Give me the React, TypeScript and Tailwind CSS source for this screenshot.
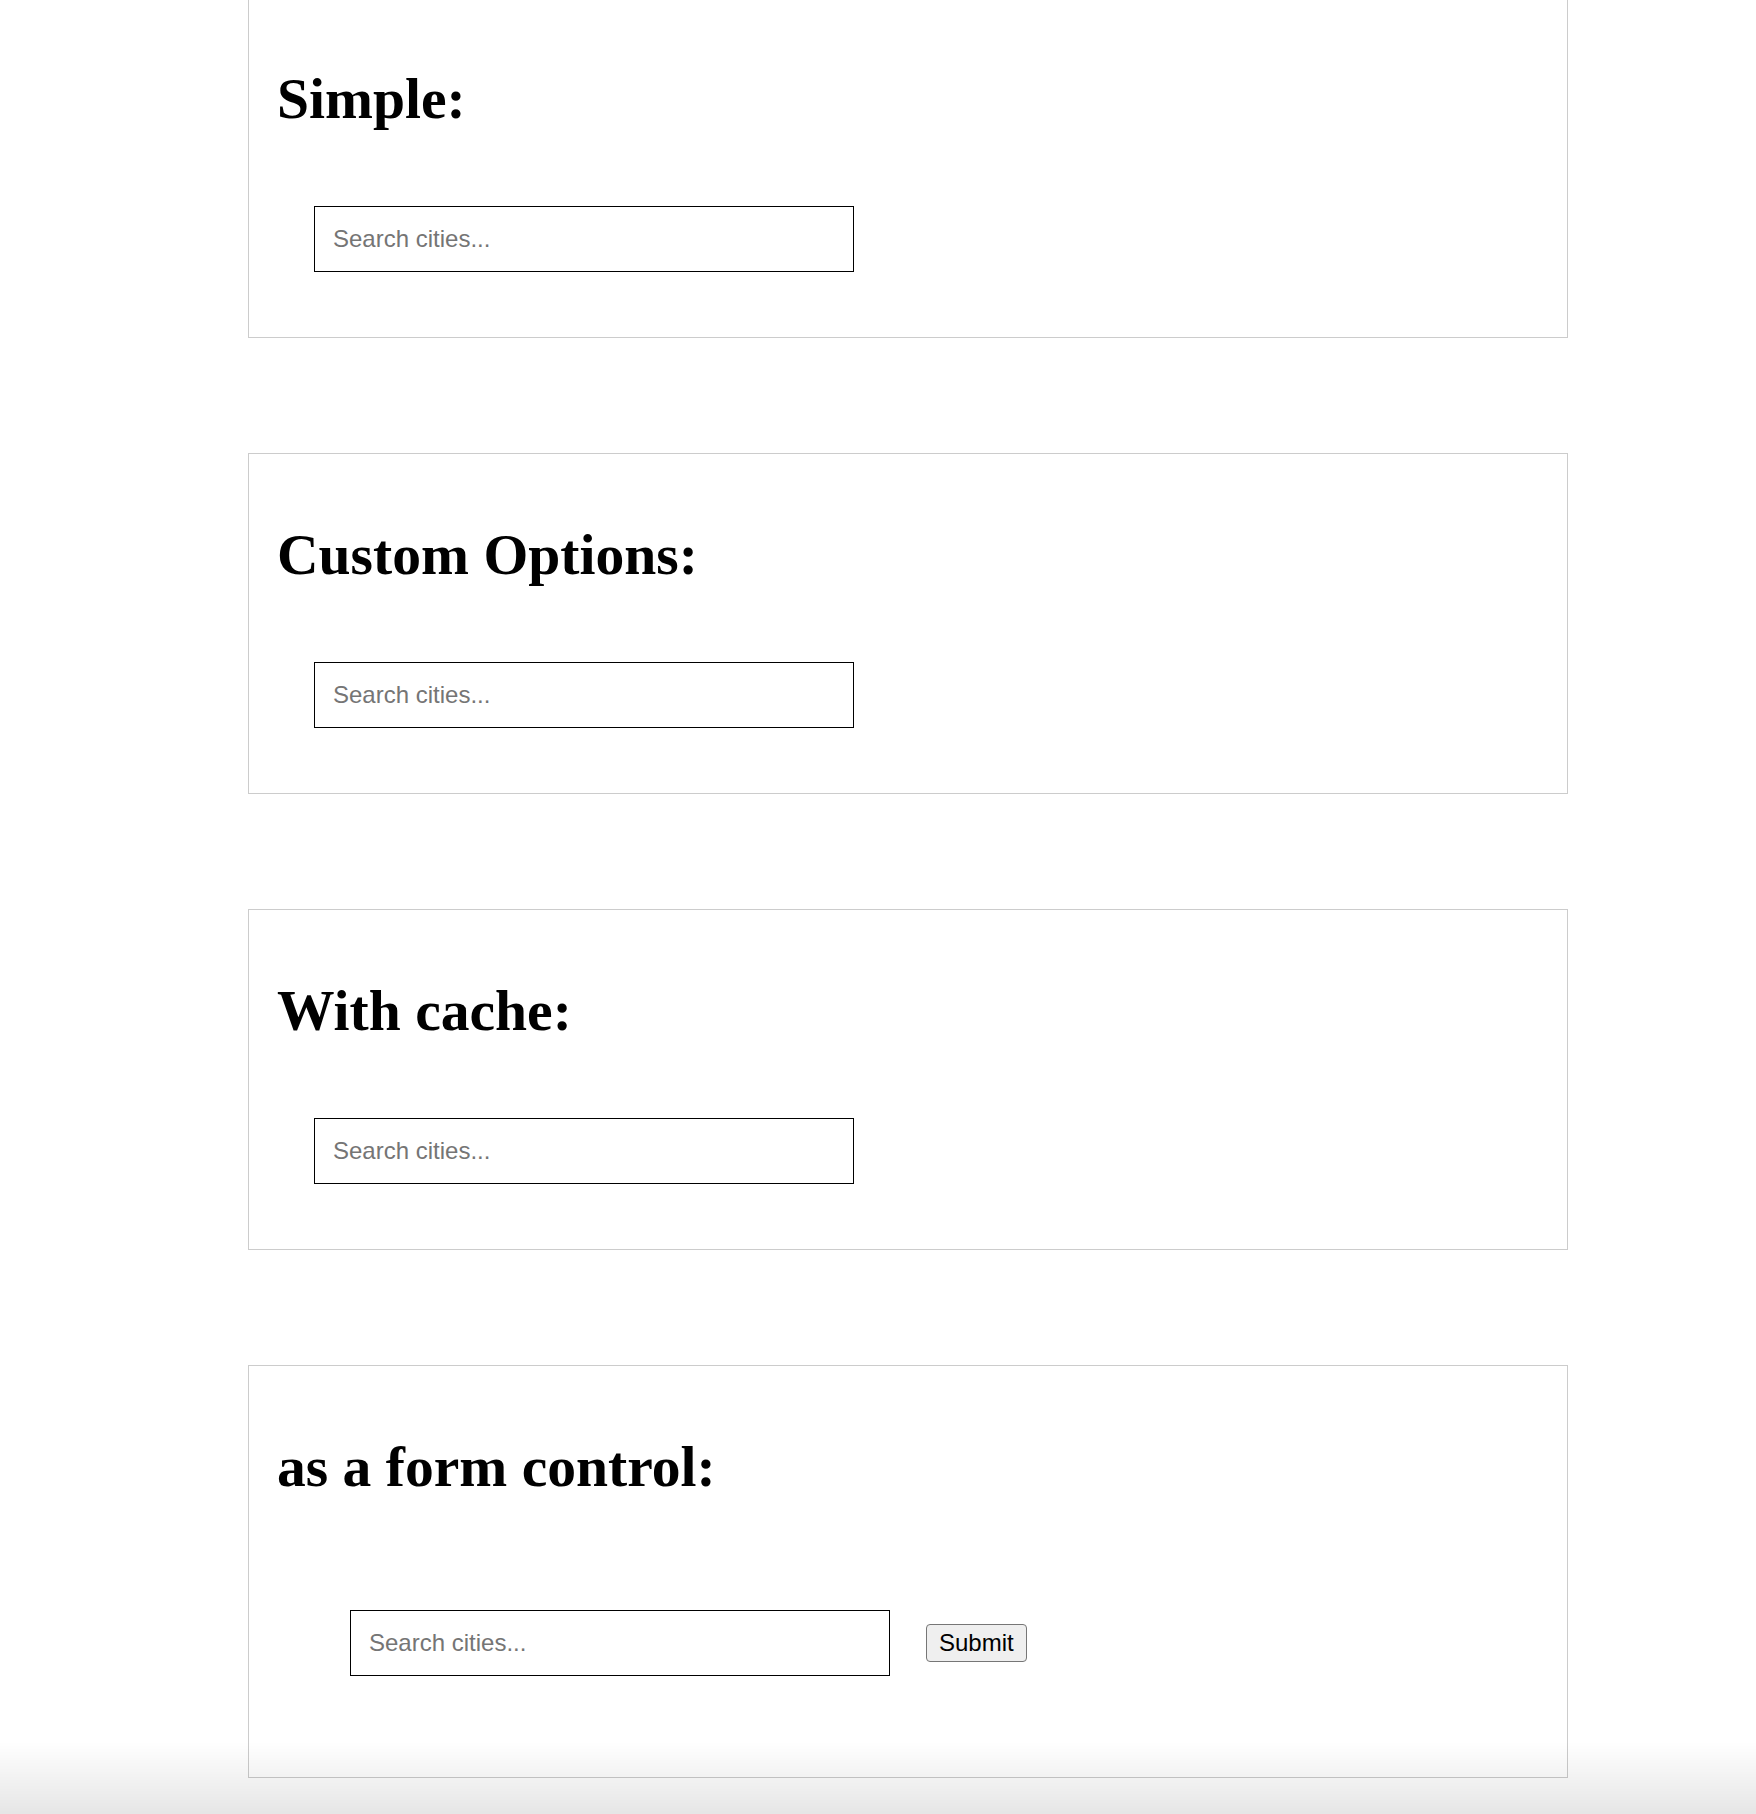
import React from 'react'

const inputClass =
  "w-[540px] h-[66px] border border-black bg-white px-[18px] text-[24px] text-black font-['Liberation_Sans',Arial,sans-serif] placeholder:text-[#757575] outline-none"

function CitySearch() {
  return <input type="text" placeholder="Search cities..." className={inputClass} />
}

function Demo({ title, children }: { title: string; children: React.ReactNode }) {
  return (
    <section className="border border-[#cccccc] px-[28px] pt-[69px] pb-[65px]">
      <h2 className="text-[57.6px] leading-[64px] font-bold text-black font-['Liberation_Serif','Times_New_Roman',serif]">
        {title}
      </h2>
      <div className="mt-[75px] ml-[37px]">{children}</div>
    </section>
  )
}

export default function App() {
  return (
    <div className="flex flex-col min-h-screen bg-white">
      <div className="-mt-[3px] ml-[248px] w-[1320px] flex flex-col gap-[115px]">
        <Demo title="Simple:">
          <CitySearch />
        </Demo>

        <Demo title="Custom Options:">
          <CitySearch />
        </Demo>

        <Demo title="With cache:">
          <CitySearch />
        </Demo>

        <Demo title="as a form control:">
          <form className="p-[36px] flex items-center gap-[36px]" onSubmit={(e) => e.preventDefault()}>
            <CitySearch />
            <button
              type="submit"
              className="h-[38px] px-[12px] border border-[#767676] rounded-[4px] bg-[#efefef] text-[24px] leading-[28px] text-black font-['Liberation_Sans',Arial,sans-serif]"
            >
              Submit
            </button>
          </form>
        </Demo>
      </div>

      {/* bottom fade of the viewport */}
      <div className="fixed inset-x-0 bottom-0 h-[72px] pointer-events-none bg-linear-to-b from-transparent to-black/10" />
    </div>
  )
}
